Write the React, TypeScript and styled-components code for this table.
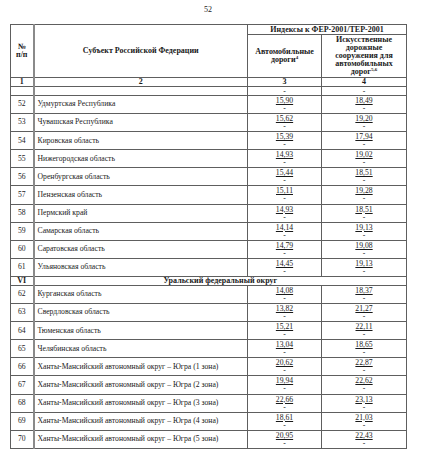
import styled, { createGlobalStyle } from "styled-components";

type RowType = {
	num: string;
	name: string;
	roads: string;
	bridges: string;
};

const ural: RowType[] = [
	{ num: "62", name: "Курганская область", roads: "14,08", bridges: "18,37" },
	{ num: "63", name: "Свердловская область", roads: "13,82", bridges: "21,27" },
	{ num: "64", name: "Тюменская область", roads: "15,21", bridges: "22,11" },
	{ num: "65", name: "Челябинская область", roads: "13,04", bridges: "18,65" },
	{ num: "66", name: "Ханты-Мансийский автономный округ – Югра (1 зона)", roads: "20,62", bridges: "22,87" },
	{ num: "67", name: "Ханты-Мансийский автономный округ – Югра (2 зона)", roads: "19,94", bridges: "22,62" },
	{ num: "68", name: "Ханты-Мансийский автономный округ – Югра (3 зона)", roads: "22,66", bridges: "23,13" },
	{ num: "69", name: "Ханты-Мансийский автономный округ – Югра (4 зона)", roads: "18,61", bridges: "21,03" },
	{ num: "70", name: "Ханты-Мансийский автономный округ – Югра (5 зона)", roads: "20,95", bridges: "22,43" },
];

const volga: RowType[] = [
	{ num: "52", name: "Удмуртская Республика", roads: "15,90", bridges: "18,49" },
	{ num: "53", name: "Чувашская Республика", roads: "15,62", bridges: "19,20" },
	{ num: "54", name: "Кировская область", roads: "15,39", bridges: "17,94" },
	{ num: "55", name: "Нижегородская область", roads: "14,93", bridges: "19,02" },
	{ num: "56", name: "Оренбургская область", roads: "15,44", bridges: "18,51" },
	{ num: "57", name: "Пензенская область", roads: "15,11", bridges: "19,28" },
	{ num: "58", name: "Пермский край", roads: "14,93", bridges: "18,51" },
	{ num: "59", name: "Самарская область", roads: "14,14", bridges: "19,13" },
	{ num: "60", name: "Саратовская область", roads: "14,79", bridges: "19,08" },
	{ num: "61", name: "Ульяновская область", roads: "14,45", bridges: "19,13" },
];

function DataRow(props: { row: RowType }) {
	return (
		<BodyRow>
			<NumCell>{props.row.num}</NumCell>
			<NameCell>{props.row.name}</NameCell>
			<ValueCell>
				<Value>{props.row.roads}</Value>
				<Dash>-</Dash>
			</ValueCell>
			<ValueCell>
				<Value>{props.row.bridges}</Value>
				<Dash>-</Dash>
			</ValueCell>
		</BodyRow>
	);
}

export default function App() {
	return (
		<>
			<GlobalStyle />
			<Page>
				<PageNumber>52</PageNumber>
				<Table>
					<colgroup>
						<col style={{ width: 23 }} />
						<col style={{ width: 214 }} />
						<col style={{ width: 74 }} />
						<col style={{ width: 85 }} />
					</colgroup>
					<thead>
						<TopRow>
							<HeadCell rowSpan={2} $first>
								№<br />п/п
							</HeadCell>
							<HeadCell rowSpan={2}>Субъект Российской Федерации</HeadCell>
							<HeadCell colSpan={2}>Индексы к ФЕР-2001/ТЕР-2001</HeadCell>
						</TopRow>
						<SubRow>
							<HeadCell>
								Автомобильные
								<br />
								дороги<Sup>4</Sup>
							</HeadCell>
							<HeadCell>
								Искусственные
								<br />
								дорожные
								<br />
								сооружения для
								<br />
								автомобильных
								<br />
								дорог<Sup>5,6</Sup>
							</HeadCell>
						</SubRow>
					</thead>
					<tbody>
						<ThinRow>
							<HeadCell $first>1</HeadCell>
							<HeadCell>2</HeadCell>
							<HeadCell>3</HeadCell>
							<HeadCell>4</HeadCell>
						</ThinRow>
						<ThinRow>
							<NumCell />
							<NameCell />
							<ValueCell>
								<Dash>-</Dash>
							</ValueCell>
							<ValueCell>
								<Dash>-</Dash>
							</ValueCell>
						</ThinRow>
						{volga.map((r) => (
							<DataRow key={r.num} row={r} />
						))}
						<ThinRow>
							<HeadCell $first>VI</HeadCell>
							<HeadCell colSpan={3}>Уральский федеральный округ</HeadCell>
						</ThinRow>
						{ural.map((r) => (
							<DataRow key={r.num} row={r} />
						))}
					</tbody>
				</Table>
			</Page>
		</>
	);
}

const GlobalStyle = createGlobalStyle`
	body {
		margin: 0;
		background: #ffffff;
		font-family: "Liberation Serif", "Times New Roman", serif;
		color: #1a1a1a;
	}
`;

const Page = styled.div`
	width: 429px;
	height: 450px;
	overflow: hidden;
	padding-left: 10px;
	box-sizing: border-box;
`;

const PageNumber = styled.div`
	width: 396px;
	height: 24px;
	padding-top: 5px;
	box-sizing: border-box;
	font-size: 8px;
	line-height: 10px;
	text-align: center;
`;

const Table = styled.table`
	width: 396px;
	table-layout: fixed;
	border-collapse: collapse;
	font-size: 8px;
	line-height: 8.3px;

	td,
	th {
		border: 1px solid #5e5e5e;
		padding: 0 3px;
		overflow: hidden;
	}
`;

const TopRow = styled.tr`
	height: 10px;
`;

const SubRow = styled.tr`
	height: 43px;
`;

const ThinRow = styled.tr`
	height: 9px;
`;

const BodyRow = styled.tr`
	height: 18.1px;
`;

const HeadCell = styled.th<{ $first?: boolean }>`
	font-weight: bold;
	text-align: center;
	vertical-align: middle;
	white-space: nowrap;
	line-height: 8px;
	border-right: ${(p) => (p.$first ? "2px solid #8a8a8a" : "1px solid #5e5e5e")} !important;
`;

const NumCell = styled.td`
	text-align: center;
	vertical-align: middle;
	font-size: 7.7px;
	border-right: 2px solid #8a8a8a !important;
`;

const NameCell = styled.td`
	text-align: left;
	vertical-align: middle;
	white-space: nowrap;
	font-size: 7.7px;
`;

const ValueCell = styled.td`
	text-align: center;
	vertical-align: top;
	font-size: 7.7px;
	padding-top: 1px !important;
`;

const Value = styled.div`
	line-height: 8px;
	text-decoration: underline;
	text-underline-offset: 1px;
	text-decoration-thickness: 0.5px;
`;

const Dash = styled.div`
	line-height: 7px;
`;

const Sup = styled.sup`
	font-size: 5px;
	line-height: 0;
	vertical-align: 3px;
`;
